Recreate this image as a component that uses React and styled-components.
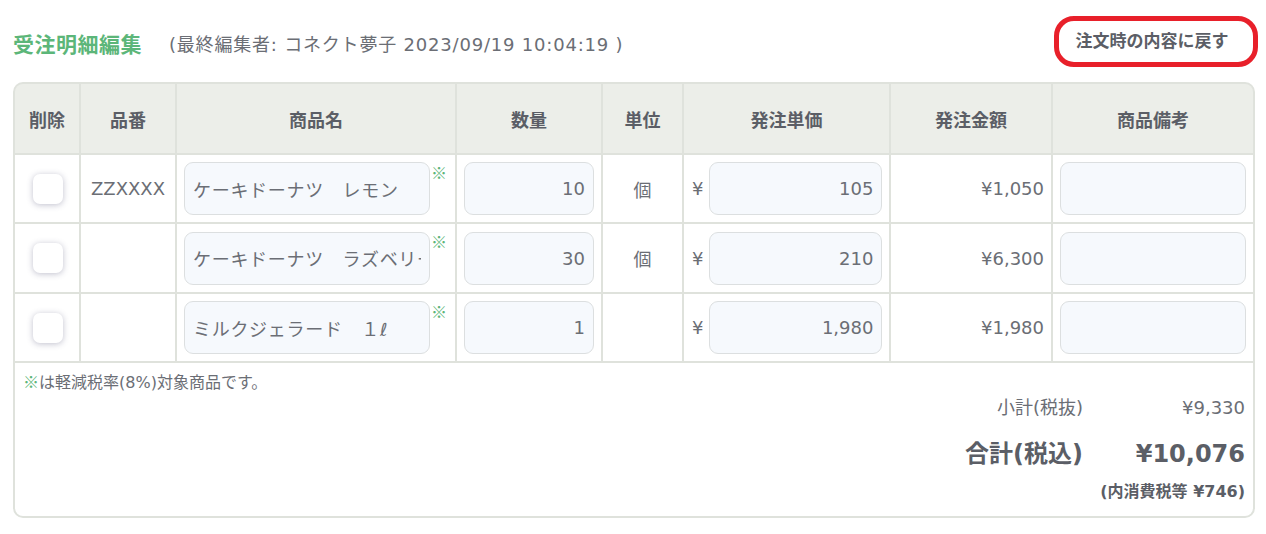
import React from "react";
import styled, { createGlobalStyle } from "styled-components";

const FONT = `"DejaVu Sans", "Noto Sans CJK JP", sans-serif`;
const CJK = `"Noto Sans CJK JP", "DejaVu Sans", sans-serif`;
const LINE = "#dfe2dc";

const Global = createGlobalStyle`
  html, body { margin: 0; padding: 0; background: #fff; }
  body { font-family: ${FONT}; color: #6b6e75; }
  * { box-sizing: border-box; }
`;

const Page = styled.div`
  padding: 16px 0 0 13px;
  width: 1258px;
`;

const TopBar = styled.div`
  display: flex;
  align-items: center;
  height: 50px;
`;

const Title = styled.h1`
  margin: 0;
  font-size: 21px;
  font-weight: 700;
  color: #5cb679;
  letter-spacing: 0.5px;
  padding-top: 4px;
`;

const Meta = styled.span`
  margin-left: 27px;
  font-size: 18px;
  letter-spacing: 0.8px;
  color: #6b6e75;
  padding-top: 4px;
`;

const ResetButton = styled.button`
  margin-left: auto;
  height: 51px;
  width: 204px;
  border: 5px solid #e8202a;
  border-radius: 20px;
  background: #fff;
  font-family: ${CJK};
  font-size: 17px;
  font-weight: 700;
  color: #5b5e66;
  cursor: pointer;
  padding: 0 8px 4px 0;
`;

const Table = styled.div`
  margin-top: 16px;
  width: 1242px;
  border: 2px solid ${LINE};
  border-radius: 10px;
  overflow: hidden;
  background: ${LINE};
  display: grid;
  grid-template-columns: 64px 94px 278px 144px 79px 205px 160px 200px;
  grid-template-rows: 69px 67px 68px 67px 153px;
  gap: 2px;
`;

const HeadCell = styled.div`
  background: #eceee9;
  display: flex;
  align-items: center;
  justify-content: center;
  font-family: ${CJK};
  font-weight: 700;
  font-size: 18px;
  color: #5b5e66;
`;

const Cell = styled.div`
  background: #fff;
  display: flex;
  align-items: center;
  justify-content: ${(p) => p.$align || "center"};
  padding: 0 7px;
  font-size: 18px;
  color: #6b6e75;
`;

const Check = styled.input.attrs({ type: "checkbox" })`
  appearance: none;
  margin: 0 0 0 2px;
  width: 30px;
  height: 30px;
  border-radius: 7px;
  background: #fff;
  box-shadow: 0 1px 6px rgba(60, 60, 100, 0.32);
`;

const Field = styled.input`
  width: ${(p) => p.$w}px;
  height: 53px;
  border: 1px solid #dcdfe0;
  border-radius: 9px;
  background: #f6f9fd;
  padding: 0 8px;
  font-family: ${FONT};
  font-size: 18px;
  letter-spacing: ${(p) => (p.$align === "right" ? 0 : 0.7)}px;
  color: #6b6e75;
  text-align: ${(p) => p.$align || "left"};
  outline: none;
`;

const Mark = styled.span`
  align-self: flex-start;
  margin-top: 9px;
  margin-left: 1px;
  font-family: ${CJK};
  font-size: 16px;
  line-height: 1;
  color: #5cb679;
`;

const Yen = styled.span`
  margin-left: 1px;
  margin-right: 6px;
`;

const Footer = styled.div`
  grid-column: 1 / -1;
  background: #fff;
  padding: 8px 8px 10px;
  display: flex;
  flex-direction: column;
`;

const Note = styled.div`
  font-size: 16px;
  line-height: 20px;
  color: #6b6e75;
  font-family: ${FONT};
`;

const NoteMark = styled.span`
  font-family: ${CJK};
  color: #5cb679;
`;

const Totals = styled.div`
  align-self: flex-end;
  display: grid;
  grid-template-columns: auto 162px;
  align-items: center;
  justify-items: end;
`;

const Label = styled.div`
  font-size: ${(p) => (p.$big ? 24 : 18)}px;
  font-weight: ${(p) => (p.$big ? 700 : 400)};
  line-height: ${(p) => (p.$big ? 42 : 30)}px;
  margin-top: ${(p) => (p.$big ? 10 : 0)}px;
  color: ${(p) => (p.$big ? "#5b5e66" : "#6b6e75")};
`;

const TaxNote = styled.div`
  grid-column: 1 / -1;
  font-size: 16px;
  font-weight: 700;
  line-height: 26px;
  margin-top: 4px;
  color: #5b5e66;
`;

const headers = ["削除", "品番", "商品名", "数量", "単位", "発注単価", "発注金額", "商品備考"];

const rows = [
  { code: "ZZXXXX", name: "ケーキドーナツ　レモン", qty: "10", unit: "個", price: "105", amount: "¥1,050" },
  { code: "", name: "ケーキドーナツ　ラズベリー", qty: "30", unit: "個", price: "210", amount: "¥6,300" },
  { code: "", name: "ミルクジェラード　１ℓ", qty: "1", unit: "", price: "1,980", amount: "¥1,980" },
];

export default function App() {
  return (
    <>
      <Global />
      <Page>
        <TopBar>
          <Title>受注明細編集</Title>
          <Meta>(最終編集者: コネクト夢子 2023/09/19 10:04:19 )</Meta>
          <ResetButton>注文時の内容に戻す</ResetButton>
        </TopBar>
        <Table>
          {headers.map((h) => (
            <HeadCell key={h}>{h}</HeadCell>
          ))}
          {rows.map((r, i) => (
            <React.Fragment key={i}>
              <Cell>
                <Check />
              </Cell>
              <Cell>{r.code}</Cell>
              <Cell $align="flex-start">
                <Field $w={246} defaultValue={r.name} />
                <Mark>※</Mark>
              </Cell>
              <Cell>
                <Field $w={130} $align="right" defaultValue={r.qty} />
              </Cell>
              <Cell>{r.unit}</Cell>
              <Cell $align="flex-start">
                <Yen>¥</Yen>
                <Field $w={173} $align="right" defaultValue={r.price} />
              </Cell>
              <Cell $align="flex-end">{r.amount}</Cell>
              <Cell>
                <Field $w={186} defaultValue="" />
              </Cell>
            </React.Fragment>
          ))}
          <Footer>
            <Note>
              <NoteMark>※</NoteMark>は軽減税率(8%)対象商品です。
            </Note>
            <Totals>
              <Label>小計(税抜)</Label>
              <Label>¥9,330</Label>
              <Label $big>合計(税込)</Label>
              <Label $big>¥10,076</Label>
              <TaxNote>(内消費税等 ¥746)</TaxNote>
            </Totals>
          </Footer>
        </Table>
      </Page>
    </>
  );
}
